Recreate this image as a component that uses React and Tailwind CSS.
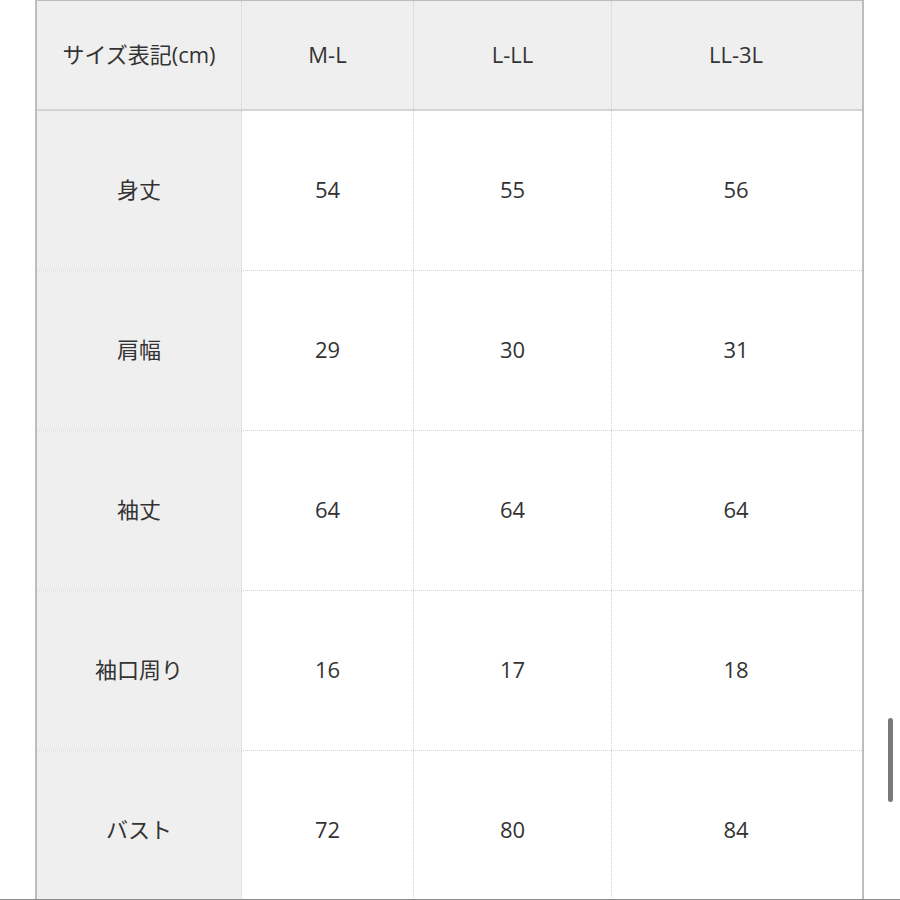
import React from "react";

const cols = ["サイズ表記(cm)", "M-L", "L-LL", "LL-3L"];
const rows = [
  ["身丈", "54", "55", "56"],
  ["肩幅", "29", "30", "31"],
  ["袖丈", "64", "64", "64"],
  ["袖口周り", "16", "17", "18"],
  ["バスト", "72", "80", "84"],
];

const widths = ["w-[205px]", "w-[172px]", "w-[198px]", "w-[248px]"];

export default function App() {
  return (
    <div
      className="relative w-[900px] h-[900px] bg-white overflow-hidden text-[#333]"
      style={{ fontFamily: '"Open Sans", "Noto Sans CJK JP", sans-serif' }}
    >
      <div className="h-[899px] overflow-hidden border-b border-[#8a8a8a] box-content">
        <div className="ml-[35px] w-[829px] border-x-2 border-t border-[#bdbdbd]">
          <div className="flex h-[110px] bg-[#efefef] border-b-2 border-[#d4d4d4]">
            {cols.map((c, i) => (
              <div
                key={i}
                className={`${widths[i]} shrink-0 flex items-center justify-center pb-[2px] text-[22px] ${i < 3 ? "border-r border-dotted border-[#d0d0d0]" : ""}`}
              >
                {c}
              </div>
            ))}
          </div>
          {rows.map((r, ri) => (
            <div key={ri} className="flex h-[160px] border-b border-dotted border-[#d4d4d4]">
              {r.map((c, i) => (
                <div
                  key={i}
                  className={`${widths[i]} shrink-0 flex items-center justify-center pb-[3px] text-[22px] ${i === 0 ? "bg-[#efefef]" : "bg-white"} ${i < 3 ? "border-r border-dotted border-[#d0d0d0]" : ""}`}
                >
                  {c}
                </div>
              ))}
            </div>
          ))}
        </div>
      </div>
      <div className="absolute left-[888px] top-[718px] w-[5px] h-[84px] rounded-full bg-[#7a7a7a]" />
    </div>
  );
}
